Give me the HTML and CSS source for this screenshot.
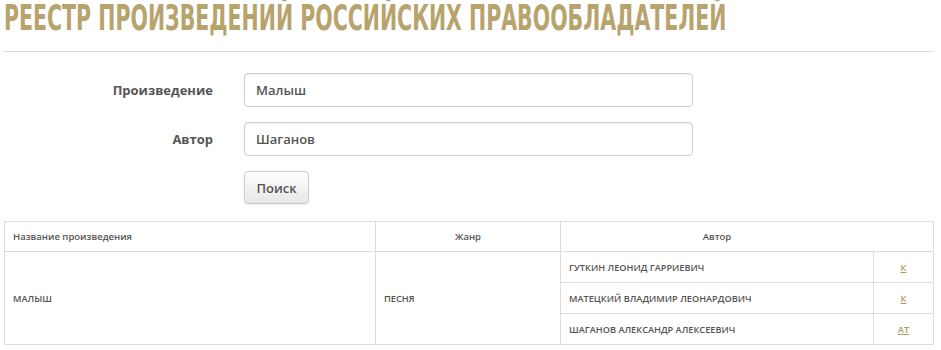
FILE: index.html
```html
<!DOCTYPE html>
<html lang="ru">
<head>
<meta charset="utf-8">
<title>Реестр</title>
<link rel="stylesheet" href="styles.css">
</head>
<body>
<div class="page">
  <h1 class="title"><span class="title-text">РЕЕСТР ПРОИЗВЕДЕНИЙ РОССИЙСКИХ ПРАВООБЛАДАТЕЛЕЙ</span></h1>
  <div class="rule"></div>
  <form class="search">
    <label class="label" for="work">Произведение</label>
    <input class="field" id="work" type="text" value="Малыш">
    <label class="label" for="author">Автор</label>
    <input class="field" id="author" type="text" value="Шаганов">
    <span></span>
    <div><button class="btn" type="button">Поиск</button></div>
  </form>
  <table class="results">
    <thead>
      <tr>
        <th class="c-name">Название произведения</th>
        <th class="c-genre">Жанр</th>
        <th class="c-author" colspan="2">Автор</th>
      </tr>
    </thead>
    <tbody>
      <tr>
        <td rowspan="3">МАЛЫШ</td>
        <td rowspan="3">ПЕСНЯ</td>
        <td class="person">ГУТКИН ЛЕОНИД ГАРРИЕВИЧ</td>
        <td class="role"><a href="#">К</a></td>
      </tr>
      <tr>
        <td class="person">МАТЕЦКИЙ ВЛАДИМИР ЛЕОНАРДОВИЧ</td>
        <td class="role"><a href="#">К</a></td>
      </tr>
      <tr>
        <td class="person">ШАГАНОВ АЛЕКСАНДР АЛЕКСЕЕВИЧ</td>
        <td class="role"><a href="#">АТ</a></td>
      </tr>
    </tbody>
  </table>
</div>
</body>
</html>
```
FILE: styles.css
```css
* { box-sizing: border-box; }
html, body { margin: 0; padding: 0; background: #fff; }
body { font-family: "Open Sans", "Noto Sans", sans-serif; color: #555; }
.page { padding: 0 7px 0 4px; }
.title {
  margin: 0;
  height: 38px;
  font-family: "DejaVu Sans Condensed", "DejaVu Sans", sans-serif;
  font-weight: 700;
  font-size: 24px;
  line-height: 24px;
  color: #b7a36c;
  white-space: nowrap;
}
.title-text {
  display: inline-block;
  transform: scale(0.95, 1.5);
  transform-origin: 0 0;
}
.rule { height: 1px; background: #ddd; margin-top: 13px; }
.search {
  display: grid;
  grid-template-columns: 209px 449px;
  column-gap: 31px;
  row-gap: 15px;
  align-items: center;
  margin-top: 21px;
}
.label {
  text-align: right;
  font-family: "Open Sans", sans-serif;
  font-weight: 700;
  font-size: 13px;
  color: #555;
}
.field {
  height: 34px;
  width: 449px;
  border: 1px solid #ccc;
  border-radius: 4px;
  padding: 0 11px;
  font-family: "Open Sans", sans-serif;
  font-size: 13px;
  font-weight: 600;
  color: #555;
  box-shadow: inset 0 1px 1px rgba(0,0,0,0.06);
}
.btn {
  height: 33px;
  width: 65px;
  padding: 0;
  border: 1px solid #ccc;
  border-radius: 4px;
  background: linear-gradient(#fff, #e6e6e6);
  box-shadow: 0 1px 2px rgba(0,0,0,0.08);
  font-family: "Open Sans", sans-serif;
  font-size: 13px;
  font-weight: 600;
  color: #555;
}
.results {
  margin-top: 17px;
  width: 930px;
  border-collapse: collapse;
  font-family: "Open Sans", sans-serif;
  font-weight: 600;
  font-size: 9.2px;
  color: #555;
}
.results th, .results td {
  border: 1px solid #ddd;
  padding: 0 8px;
  vertical-align: middle;
}
.results th { height: 30px; font-weight: 600; font-size: 9.5px; }
.results td { height: 31px; }
.c-name { width: 371px; text-align: left; }
.c-genre { width: 185px; text-align: center; }
.c-author { text-align: center; padding-right: 68px !important; }
.person { width: 313px; }
.role { width: 60px; text-align: center; }
.role a { color: #b09a60; text-decoration: underline; }
```
